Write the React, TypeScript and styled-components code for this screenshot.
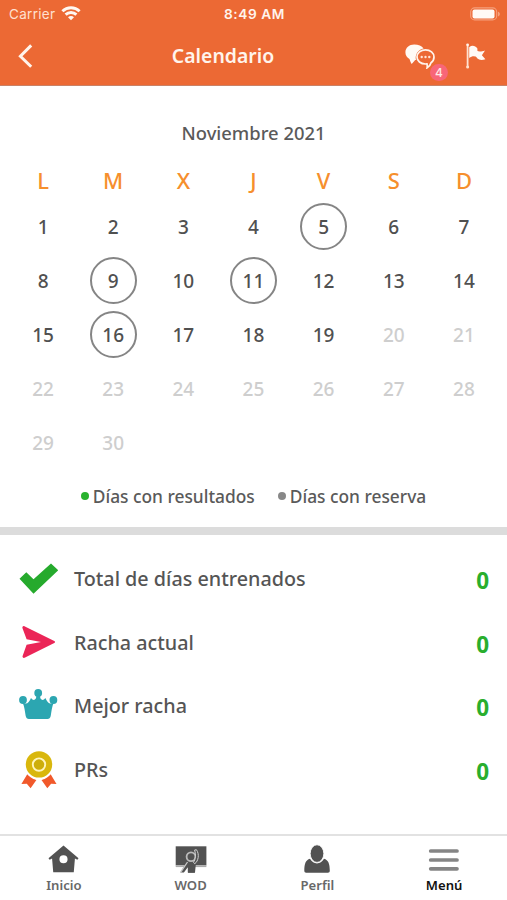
import React from "react";
import styled, { createGlobalStyle } from "styled-components";

const Global = createGlobalStyle`
  * { box-sizing: border-box; }
  body { margin: 0; background: #fff; }
`;

const Screen = styled.div`
  width: 507px;
  height: 900px;
  display: flex;
  flex-direction: column;
  overflow: hidden;
  background: #fff;
  color: #555;
  font-family: "Noto Sans", "Open Sans", sans-serif;
  font-weight: 500;
`;

const Header = styled.header`
  height: 86px;
  flex: none;
  background: #ec6934;
  border-bottom: 1px solid #c98267;
  color: #fff4ec;
`;

const StatusBar = styled.div`
  height: 27px;
  display: grid;
  grid-template-columns: 1fr auto 1fr;
  align-items: center;
  padding: 0 7px 0 9px;
  font-family: Inter, sans-serif;
  font-size: 13.5px;
`;

const Carrier = styled.div`
  display: flex;
  align-items: center;
  gap: 6px;
  font-weight: 400;
  letter-spacing: 0.3px;
  color: #ffe0d0;
`;

const Clock = styled.div`
  font-weight: 600;
  font-size: 13.7px;
  letter-spacing: 0.55px;
`;

const Battery = styled.div`
  display: flex;
  justify-content: flex-end;
`;

const NavBar = styled.div`
  height: 58px;
  display: grid;
  grid-template-columns: 127px 192px 1fr;
  align-items: center;
`;

const BackButton = styled.button`
  display: flex;
  border: 0;
  padding: 0 0 0 17px;
  background: none;
`;

const Title = styled.h1`
  margin: 0;
  font-size: 19.4px;
  line-height: 26px;
  font-weight: 600;
  text-align: center;
`;

const Actions = styled.div`
  display: flex;
  align-items: center;
  gap: 31px;
  padding-left: 86px;
`;

const Chat = styled.div`
  position: relative;
  display: flex;
`;

const Badge = styled.span`
  position: absolute;
  left: 25px;
  top: 20px;
  width: 18px;
  height: 17px;
  border-radius: 9px;
  background: #f86678;
  color: #ffe9e6;
  font: 500 12px/17px Inter, sans-serif;
  text-align: center;
`;

const Calendar = styled.section`
  height: 441px;
  flex: none;
  padding: 34px 8px 0;
`;

const Month = styled.h2`
  margin: 0;
  height: 25px;
  line-height: 25px;
  font-size: 18.4px;
  font-weight: 500;
  text-align: center;
  color: #5a5a5a;
`;

const Week = styled.div`
  display: grid;
  grid-template-columns: repeat(7, 1fr);
  justify-items: center;
  align-items: center;
`;

const Weekdays = styled(Week)`
  height: 54px;
  margin-top: 8px;
  color: #f68f2d;
  font-size: 22px;
`;

const Days = styled(Week)`
  grid-auto-rows: 53.8px;
  margin-top: -7px;
  font-size: 19px;
`;

const Day = styled.span<{ $muted: boolean; $reserved: boolean }>`
  width: 47px;
  height: 47px;
  display: flex;
  align-items: center;
  justify-content: center;
  padding-top: 1px;
  border: 2px solid ${(p) => (p.$reserved ? "#858585" : "transparent")};
  border-radius: 50%;
  color: ${(p) => (p.$muted ? "#cecece" : "#505050")};
`;

const Legend = styled.div`
  display: flex;
  justify-content: center;
  gap: 23px;
  margin-top: 15px;
  line-height: 24px;
  font-size: 17.35px;
  color: #5a5a5a;
`;

const LegendItem = styled.div<{ $color: string }>`
  display: flex;
  align-items: center;
  gap: 4px;
  white-space: nowrap;
  &::before {
    content: "";
    width: 8px;
    height: 8px;
    border-radius: 50%;
    background: ${(p) => p.$color};
  }
`;

const Divider = styled.div`
  height: 8px;
  flex: none;
  background: #dcdcdc;
`;

const Stats = styled.section`
  flex: 1;
  padding: 12px 18px 0 18px;
`;

const Stat = styled.div`
  height: 63.6px;
  display: flex;
  align-items: center;
  font-size: 19.75px;
`;

const StatIcon = styled.div`
  width: 56px;
  display: flex;
`;

const StatValue = styled.span`
  margin: 4px 0 0 auto;
  color: #29ae2d;
  font-family: "Open Sans", sans-serif;
  font-size: 22.5px;
  font-weight: 700;
`;

const Tabs = styled.nav`
  height: 66px;
  flex: none;
  display: grid;
  grid-template-columns: repeat(4, 1fr);
  border-top: 2px solid #e2e2e2;
`;

const Tab = styled.div<{ $active?: boolean }>`
  display: flex;
  flex-direction: column;
  align-items: center;
  padding: 8px 0 0 1px;
  color: ${(p) => (p.$active ? "#111" : "#686868")};
  font-size: 13.1px;
  font-weight: 600;
  line-height: 18px;
  svg { margin-bottom: 2px; }
`;

const WifiIcon = () => (
  <svg width="20" height="15" viewBox="0 0 20 15" fill="none" stroke="#fff8f2" strokeWidth="2.9">
    <path d="M1.4 5.3C6.2.6 13.8.6 18.6 5.3" />
    <path d="M4.6 8.6c3-2.9 7.8-2.9 10.8 0" />
    <path d="M7 11.3c1.7-1.6 4.3-1.6 6 0l-3 3z" fill="#fff8f2" stroke="none" />
  </svg>
);

const BatteryIcon = () => (
  <svg width="31" height="14" viewBox="0 0 31 14">
    <rect x="1.7" y=".9" width="26" height="12" rx="4" fill="none" stroke="#f5a07c" strokeWidth="1.1" />
    <rect x="3.5" y="2.5" width="22" height="9" rx="2" fill="#fffaf5" />
    <path d="M29.2 4.7c2 .7 2 4 0 4.7z" fill="#f7ae8e" />
  </svg>
);

const BackIcon = () => (
  <svg width="17" height="26" viewBox="0 0 17 26" fill="none" stroke="#fff4ec" strokeWidth="3">
    <path d="M14.2 2.4L3.4 13.2l10.8 10.6" />
  </svg>
);

const ChatIcon = () => (
  <svg width="30" height="25" viewBox="0 0 30 25">
    <path d="M9.2.5C4.2.5.4 3.8.4 8.2c0 3 1.6 5.4 4.1 6.8.6 1.8 1 3.4 2.2 5.1l3.5-4h.8C9.7 10.4 13 5.6 18.6 4.4 16.8 2.2 13.4.5 9.2.5z" fill="#fffaf5" />
    <path d="M20.5 5.8c-4.8 0-8.5 3.2-8.5 7.2s3.7 7 8.5 7c.5 0 1 0 1.5-.1.3 1.6.4 2.7.1 4 1.9-1.3 3.4-3 3.9-5.2 1.9-1.3 3-3.4 3-5.7 0-4-3.7-7.2-8.5-7.2z" fill="none" stroke="#fff4ec" strokeWidth="1.7" />
    <g fill="#ffe5d7"><circle cx="16.7" cy="13" r="1.2" /><circle cx="20.5" cy="13" r="1.2" /><circle cx="24.3" cy="13" r="1.2" /></g>
  </svg>
);

const FlagIcon = () => (
  <svg width="20" height="26" viewBox="0 0 20 26">
    <path d="M1.6 2v22" stroke="#ffe1d0" strokeWidth="1.8" />
    <circle cx="1.6" cy="1.8" r="1.4" fill="#fff4ec" /><circle cx="1.6" cy="24" r="1.5" fill="#ffe1d0" />
    <path d="M3.2 4.2c3-2.4 6-1.4 8.2 1.2v9.4c-2.4-2-5.1-2-8.2.1z" fill="#fffaf5" />
    <path d="M10.8 7.8c2.700 1.300 5 .7 8.200-.4l-3.100 4.800 3.500 4c-3.700 1.400-6 1-8.600-1.100z" fill="#fffaf5" />
  </svg>
);

const CheckIcon = () => (
  <svg width="40" height="32" viewBox="0 0 40 32">
    <path d="M1.5 15.8l6.8-6.5 7.2 7L33 .4l7.2 6.8-24.7 23.6z" fill="#26aa2d" />
  </svg>
);

const SendIcon = () => (
  <svg width="40" height="34" viewBox="0 0 40 34">
    <path d="M6.4 1.2L36.3 16.1c1 .5 1 1.3 0 1.8L6.6 32.8c-1.3.5-2.4-.5-2-1.8l4-11.3L23 17 8.6 14.2l-4.1-11c-.5-1.4.6-2.6 1.9-2z" fill="#eb2557" />
  </svg>
);

const CrownIcon = () => (
  <svg width="40" height="34" viewBox="0 0 40 34" fill="#2ca6b1">
    <circle cx="5" cy="11" r="3.9" /><circle cx="20.2" cy="3.9" r="3.9" /><circle cx="35.4" cy="11" r="3.9" />
    <path d="M4.500 13.500c4 2.500 6.500.5 8.500-4.500 2.500 3.500 5.500 2 5.500-3h3.400c0 5 3 6.500 5.500 3 2 5 4.500 7 8.500 4.500-2 3.500-2.400 9-3.200 13.500-.4 2.100-1.500 3-3.200 3H10.900c-1.700 0-2.800-.9-3.200-3-.8-4.500-1.200-10-3.200-13.500z" />
  </svg>
);

const MedalIcon = () => (
  <svg width="40" height="38" viewBox="0 0 40 38">
    <path d="M9.4 23l9 6-5.800 8.200-3.800-4.400-5.400.2zM32.500 23l-9 6 5.800 8.200 3.800-4.400 5.400.2z" fill="#f1592b" />
    <circle cx="21" cy="14.500" r="14.600" fill="#fff" />
    <circle cx="21" cy="13.400" r="13.200" fill="#d9b70c" />
    <circle cx="21" cy="13.600" r="6.200" fill="#cdae0b" stroke="#fff5bd" strokeWidth="1.900" />
  </svg>
);

const HomeIcon = () => (
  <svg width="31" height="30" viewBox="0 0 32 30" fill="#525252">
    <path fillRule="evenodd" d="M16 1L31.500 14.200l-1.200 1.700-2.500-1.400-1.200 14.200H5.400L4.200 14.500l-2.500 1.400L.5 14.200zM16 11a4.200 4.200 0 100 8.400 4.200 4.200 0 000-8.400z" />
  </svg>
);

const BoardIcon = () => (
  <svg width="32" height="30" viewBox="0 0 32 30">
    <path d="M.7 2.300h30.700v19H.7z" fill="#525252" />
    <path d="M.7 21.300h30.700v1.800H.7z" fill="#aaa" />
    <path d="M5.300 28.500l6.800-11.100c3 .8 7.300-.4 9.500-4.400L20 28.500h-7.200v-5.300l-3.900 5.300z" fill="#525252" />
    <path d="M5.600 28.300l6.900-10.300" stroke="#c9c9c9" strokeWidth="1.300" />
    <circle cx="16" cy="12.700" r="4.400" fill="#525252" stroke="#bbb" strokeWidth="1.800" />
    <path d="M19.600 6l1.800-.3c3.300 4.500 2 11.400-1.700 14.100l-1.200-1.500c2.200-3.200 2.700-7.200 1.100-12.300z" fill="#525252" stroke="#d3d3d3" />
    <path d="M13 20.500h6.800v8.300H13z" fill="#525252" />
  </svg>
);

const ProfileIcon = () => (
  <svg width="32" height="30" viewBox="0 0 32 30" fill="#525252">
    <path d="M9 14.800c3.500 6.200 10.500 6.200 14 0 4.400 1.300 5.700 5 5.800 11.900 0 1.300-.7 2-1.900 2H5.200c-1.200 0-1.900-.7-1.900-2 .1-6.900 1.300-10.600 5.700-11.900z" />
    <ellipse cx="16" cy="9.600" rx="6.800" ry="8.800" stroke="#fff" strokeWidth=".8" />
  </svg>
);

const MenuIcon = () => (
  <svg width="32" height="30" viewBox="0 0 32 30" stroke="#858585" strokeWidth="3.700" strokeLinecap="round">
    <path d="M2.700 7h26.300M2.700 16h26.300M2.700 24.800h26.300" />
  </svg>
);

const reservedDays = [5, 9, 11, 16];
const today = 19;

const stats = [
  { label: "Total de días entrenados", value: 0, icon: <CheckIcon /> },
  { label: "Racha actual", value: 0, icon: <SendIcon /> },
  { label: "Mejor racha", value: 0, icon: <CrownIcon /> },
  { label: "PRs", value: 0, icon: <MedalIcon /> },
];

export default function App() {
  return (
    <>
      <Global />
      <Screen>
        <Header>
          <StatusBar>
            <Carrier>Carrier <WifiIcon /></Carrier>
            <Clock>8:49 AM</Clock>
            <Battery><BatteryIcon /></Battery>
          </StatusBar>
          <NavBar>
            <BackButton aria-label="Volver"><BackIcon /></BackButton>
            <Title>Calendario</Title>
            <Actions>
              <Chat><ChatIcon /><Badge>4</Badge></Chat>
              <FlagIcon />
            </Actions>
          </NavBar>
        </Header>
        <Calendar>
          <Month>Noviembre 2021</Month>
          <Weekdays>
            {["L", "M", "X", "J", "V", "S", "D"].map((d) => <span key={d}>{d}</span>)}
          </Weekdays>
          <Days>
            {Array.from({ length: 30 }, (_, i) => i + 1).map((d) => (
              <Day key={d} $muted={d > today} $reserved={reservedDays.includes(d)}>{d}</Day>
            ))}
          </Days>
          <Legend>
            <LegendItem $color="#29b22e">Días con resultados</LegendItem>
            <LegendItem $color="#888">Días con reserva</LegendItem>
          </Legend>
        </Calendar>
        <Divider />
        <Stats>
          {stats.map((s) => (
            <Stat key={s.label}>
              <StatIcon>{s.icon}</StatIcon>
              {s.label}
              <StatValue>{s.value}</StatValue>
            </Stat>
          ))}
        </Stats>
        <Tabs>
          <Tab><HomeIcon />Inicio</Tab>
          <Tab><BoardIcon />WOD</Tab>
          <Tab><ProfileIcon />Perfil</Tab>
          <Tab $active><MenuIcon />Menú</Tab>
        </Tabs>
      </Screen>
    </>
  );
}
